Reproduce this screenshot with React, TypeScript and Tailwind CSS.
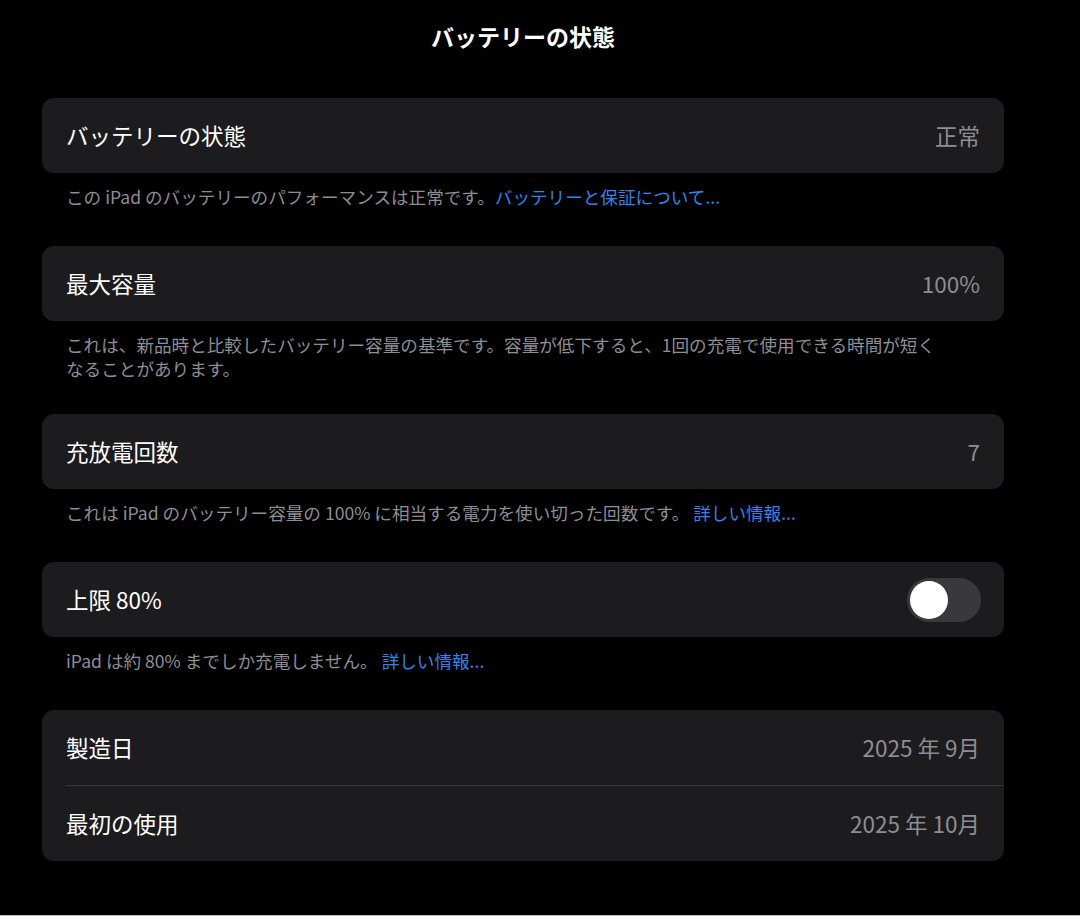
const FONT = '"Noto Sans CJK JP", "Noto Sans", sans-serif';

function Footer({ children, pb = 'pb-[37px]' }: { children: React.ReactNode; pb?: string }) {
  return (
    <p className={`px-6 pt-[12px] text-[17.6px] leading-[24px] text-[#8d8d93] ${pb}`}>{children}</p>
  );
}

function Link({ children }: { children: React.ReactNode }) {
  return <span className="text-[#2f84f0]">{children}</span>;
}

function Row({ label, value }: { label: string; value?: React.ReactNode }) {
  return (
    <div className="flex h-[75px] items-center justify-between px-6">
      <span className="text-[22.5px] text-white">{label}</span>
      {value !== undefined && <span className="text-[22.5px] text-[#8d8d93]">{value}</span>}
    </div>
  );
}

function Toggle() {
  return (
    <div className="flex h-[44px] w-[74px] items-center rounded-full bg-[#39393d] px-[3px]">
      <div className="h-[38px] w-[38px] rounded-full bg-white" />
    </div>
  );
}

export default function App() {
  return (
    <div
      className="h-[916px] w-full overflow-hidden border-b border-[#bdbdbd] bg-black"
      style={{ fontFamily: FONT }}
    >
      <div className="mx-[42px] w-[962px]">
        <h1 className="pt-[20px] text-center text-[23px] font-bold leading-[32px] text-white">
          バッテリーの状態
        </h1>

        <div className="mt-[46px] rounded-[12px] bg-[#1c1c1e]">
          <Row label="バッテリーの状態" value="正常" />
        </div>
        <Footer>
          この iPad のバッテリーのパフォーマンスは正常です。<Link>バッテリーと保証について...</Link>
        </Footer>

        <div className="rounded-[12px] bg-[#1c1c1e]">
          <Row label="最大容量" value="100%" />
        </div>
        <Footer pb="pb-[33px]">
          これは、新品時と比較したバッテリー容量の基準です。容量が低下すると、1回の充電で使用できる時間が短く
          <br />
          なることがあります。
        </Footer>

        <div className="rounded-[12px] bg-[#1c1c1e]">
          <Row label="充放電回数" value="7" />
        </div>
        <Footer>
          これは iPad のバッテリー容量の 100% に相当する電力を使い切った回数です。 <Link>詳しい情報...</Link>
        </Footer>

        <div className="rounded-[12px] bg-[#1c1c1e]">
          <div className="flex h-[75px] items-center justify-between pl-6 pr-[23px]">
            <span className="text-[22.5px] text-white">上限 80%</span>
            <Toggle />
          </div>
        </div>
        <Footer>
          iPad は約 80% までしか充電しません。 <Link>詳しい情報...</Link>
        </Footer>

        <div className="rounded-[12px] bg-[#1c1c1e]">
          <Row label="製造日" value="2025 年 9月" />
          <div className="ml-6 h-px bg-[#38383a]" />
          <Row label="最初の使用" value="2025 年 10月" />
        </div>
      </div>
    </div>
  );
}
